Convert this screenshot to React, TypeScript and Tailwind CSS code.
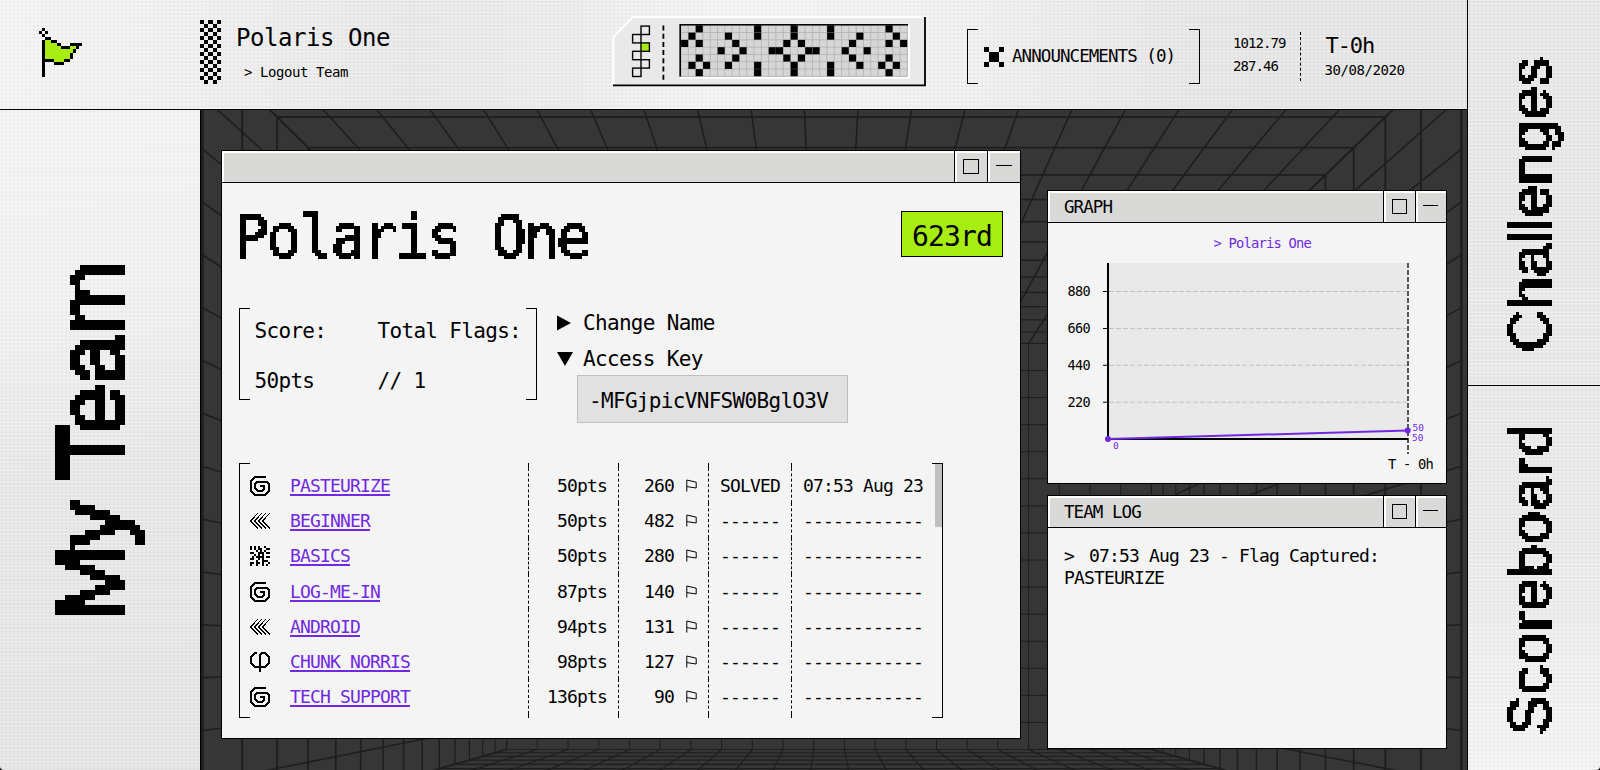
import type { ReactNode } from "react";

/* ---------- pixel helpers ---------- */

function PixelArt({ rows, colors, className }: { rows: string[]; colors: Record<string, string>; className: string }) {
  return (
    <svg
      viewBox={`0 0 ${rows[0].length} ${rows.length}`}
      preserveAspectRatio="none"
      shapeRendering="crispEdges"
      className={className}
    >
      {rows.map((row, y) =>
        row.split("").map((ch, x) =>
          colors[ch] ? <rect key={`${x}-${y}`} x={x} y={y} width={1} height={1} fill={colors[ch]} /> : null
        )
      )}
    </svg>
  );
}

/* Snap large lettering to a coarse pixel grid */
function PixelFilters() {
  return (
    <svg width="0" height="0" className="absolute">
      <filter id="grid5" x="0" y="0" width="100%" height="100%">
        <feFlood x="2" y="2" width="1" height="1" />
        <feComposite x="0" y="0" width="5" height="5" />
        <feTile result="mesh" />
        <feComposite in="SourceGraphic" in2="mesh" operator="in" />
        <feComponentTransfer>
          <feFuncA type="discrete" tableValues="0 1" />
        </feComponentTransfer>
        <feMorphology operator="dilate" radius="2" />
      </filter>
      <filter id="grid3" x="0" y="0" width="100%" height="100%">
        <feFlood x="1" y="1" width="1" height="1" />
        <feComposite x="0" y="0" width="3" height="3" />
        <feTile result="mesh" />
        <feComposite in="SourceGraphic" in2="mesh" operator="in" />
        <feComponentTransfer>
          <feFuncA type="discrete" tableValues="0 1" />
        </feComponentTransfer>
        <feMorphology operator="dilate" radius="1" />
      </filter>
    </svg>
  );
}

/* ---------- header pieces ---------- */

const FLAG = [
  ".x............",
  "x.x...........",
  ".x............",
  "..xx..........",
  ".xggxx........",
  ".xggggx...xxxx",
  ".xgggggxxxggx.",
  ".xgggggggggx..",
  ".xggggggggx...",
  ".xggggggggx...",
  ".xxxxgggxx....",
  ".x...xxx......",
  ".x............",
  ".x............",
  ".x............",
  ".x............",
];

const CHECKER = Array.from({ length: 16 }, (_, r) => (r % 2 ? ".x.x." : "x.x.x"));

const DISPLAY: number[][] = [
  [2, 10, 15, 20, 28],
  [1, 6, 10, 15, 20, 24, 29],
  [0, 2, 7, 14, 16, 23, 28, 30],
  [5, 8, 12, 13, 17, 18, 22, 25],
  [2, 7, 14, 16, 23, 28],
  [1, 3, 6, 10, 15, 20, 24, 27, 29],
  [2, 10, 15, 20, 28],
];

function Console() {
  const cell = 7.3;
  return (
    <svg viewBox="612 15 316 73" className="h-[73px] w-[316px] shrink-0">
      <polygon points="633,17 925,17 925,85 613.5,85 613.5,37" fill="#e9e9e9" />
      <path d="M613.5 85V37L633 17H925" fill="none" stroke="#fff" strokeWidth="2" />
      <path d="M613 85.3H925V17" fill="none" stroke="#000" strokeWidth="1.8" />
      {[
        [1, 0],
        [0, 1],
        [1, 2],
        [0, 3],
        [1, 4],
        [0, 5],
      ].map(([c, r]) => (
        <rect
          key={r}
          x={632.6 + c * 8.4}
          y={26.1 + r * 8.4}
          width={8.4}
          height={8.4}
          fill={r === 2 ? "#a8ed12" : "none"}
          stroke="#000"
          strokeWidth="1.4"
        />
      ))}
      <path d="M663.4 25.5V80" stroke="#000" strokeWidth="1.8" strokeDasharray="5 3.2" />
      <rect x="679.5" y="24" width="230" height="54" fill="#d6d6d6" />
      <path d="M680 78H909V24.5" fill="none" stroke="#fff" strokeWidth="2" />
      {Array.from({ length: 32 }, (_, i) => (
        <path key={`v${i}`} d={`M${681 + i * cell} 25V76.5`} stroke="#b5b5b5" strokeWidth="0.9" />
      ))}
      {Array.from({ length: 8 }, (_, i) => (
        <path key={`h${i}`} d={`M681 ${25.2 + i * cell}H907.5`} stroke="#b5b5b5" strokeWidth="0.9" />
      ))}
      {DISPLAY.map((cols, r) =>
        cols.map((c) => (
          <rect
            key={`${r}-${c}`}
            x={681.1 + c * cell}
            y={25.3 + r * cell}
            width={cell - 0.2}
            height={cell - 0.2}
            fill="#000"
          />
        ))
      )}
      <path d="M680.2 76.5V24.7H908" fill="none" stroke="#000" strokeWidth="1.6" />
    </svg>
  );
}

function Bracket({ className, children }: { className: string; children: ReactNode }) {
  return (
    <div className={`flex ${className}`}>
      <div className="w-[11px] shrink-0 border-y border-l border-black" />
      <div className="min-w-0 flex-1">{children}</div>
      <div className="w-[11px] shrink-0 border-y border-r border-black" />
    </div>
  );
}

/* ---------- wireframe room ---------- */

function Room() {
  const vx = 826;
  const vy = 658.5;
  const back = 322.4;
  const frames = Array.from({ length: 15 }, (_, k) => 1 / (0.0015886 + k * 0.00010809));
  const left = (w: number) => vx - w * 0.9906;
  const right = (w: number) => vx + w * 1.0094;
  const top = (w: number) => vy - w * 0.9772;
  const bottom = (w: number) => vy + w * 0.2823;
  const far = 900;
  const cols = Array.from({ length: 22 }, (_, i) => left(back) + (i * (right(back) - left(back))) / 21);
  const rows = Array.from({ length: 16 }, (_, i) => top(back) + (i * (bottom(back) - top(back))) / 15);
  const s = far / back;
  const wall = 629.5 / back;
  return (
    <svg viewBox="201 110 1266 660" className="absolute inset-0 h-full w-full" stroke="#1e1e1e" fill="none">
      <rect x="201" y="110" width="1266" height="660" fill="#363636" stroke="none" />
      {frames.map((w, k) => (
        <rect
          key={k}
          x={left(w)}
          y={top(w)}
          width={right(w) - left(w)}
          height={bottom(w) - top(w)}
          strokeWidth={k === 0 ? 2.6 : 1 + (14 - k) * 0.07}
        />
      ))}
      {cols.map((x, i) => (
        <g key={i}>
          <path d={`M${x} ${top(back)}L${vx + (x - vx) * wall} ${vy + (top(back) - vy) * wall}`} strokeWidth="1.6" />
          <path d={`M${x} ${bottom(back)}L${vx + (x - vx) * s} ${vy + (bottom(back) - vy) * s}`} strokeWidth="1.2" />
          <path d={`M${x} ${top(back)}V${bottom(back)}`} strokeWidth="1" />
        </g>
      ))}
      {rows.map((y, i) => (
        <g key={i}>
          <path d={`M${left(back)} ${y}L${left(629.5)} ${vy + (y - vy) * wall}`} strokeWidth="1.6" />
          <path d={`M${right(back)} ${y}L${right(629.5)} ${vy + (y - vy) * wall}`} strokeWidth="1.6" />
          <path d={`M${left(back)} ${y}H${right(back)}`} strokeWidth="1" />
        </g>
      ))}
    </svg>
  );
}

/* ---------- windows ---------- */

function Window({
  title,
  wide,
  className,
  children,
}: {
  title?: string;
  wide?: boolean;
  className: string;
  children: ReactNode;
}) {
  return (
    <section className={`relative flex flex-col border border-black bg-[#f4f4f4] ${className}`}>
      <div className="flex h-8 shrink-0 border-b border-black bg-[#d9d9d7]">
        <div className="flex-1 border-t-2 border-l-2 border-white pl-[14px] text-[17.5px] leading-[29px] tracking-[-0.94px]">
          {title}
        </div>
        <div className={`flex border-l border-black ${wide ? "w-[33px]" : "w-8"}`}>
          <div className="flex flex-1 items-center justify-center border-t-2 border-l-2 border-white">
            <div className={`mb-[2px] h-[15px] border border-black ${wide ? "mr-[2px] w-4" : "mr-[2px] w-[15px]"}`} />
          </div>
        </div>
        <div className={`flex border-l border-black ${wide ? "w-[33px]" : "w-[31px]"}`}>
          <div className="flex flex-1 justify-center border-t-2 border-l-2 border-white pt-[12px]">
            <div className={`mr-[3px] h-px bg-black ${wide ? "w-4" : "w-[15px]"}`} />
          </div>
        </div>
      </div>
      {children}
    </section>
  );
}

/* ---------- challenge table ---------- */

type IconKind = "spiral" | "chevrons" | "maze" | "phi";

const MAZE = [
  "x.x.x..x..",
  "x.x.xx..xx",
  "...x.x.x..",
  "xx..xxx.xx",
  "..x.x.x...",
  ".x.xxxx.xx",
  "xx..x.x...",
  "...x..xxx.",
  "xx.xx.x..x",
  "x..x..x.x.",
];

function CategoryIcon({ kind }: { kind: IconKind }) {
  if (kind === "maze") return <PixelArt rows={MAZE} colors={{ x: "#000" }} className="size-5" />;
  return (
    <svg viewBox="0 0 20 20" className="mt-px size-5" fill="none" stroke="#000" shapeRendering="crispEdges">
      {kind === "spiral" && (
        <path d="M16 1H5L1 5V15L5 19H15L19 15V8L16 5.5H8L5 8V12L8 15H12L14 13V10H10" strokeWidth="2" />
      )}
      {kind === "chevrons" && (
        <path
          d="M8 2L.5 9.7L8 17.5M12 2L4.5 9.7L12 17.5M16 2L8.5 9.7L16 17.5M20 2L12.5 9.7L20 17.5"
          strokeWidth="1.3"
        />
      )}
      {kind === "phi" && <path d="M7 1H5L1 5V11L5 15H15L19 11V5L15 1H12L10 3V20" strokeWidth="1.9" />}
    </svg>
  );
}

function Pennant() {
  return (
    <svg viewBox="0 0 11 13" className="h-[13px] w-[11px]" fill="none" stroke="#000" strokeWidth="1">
      <path d="M0.8 12.6V1L10.2 3.2V9L0.8 7.6" />
    </svg>
  );
}

const CHALLENGES: { icon: IconKind; name: string; pts: string; flags: string; status: string; at: string }[] = [
  { icon: "spiral", name: "PASTEURIZE", pts: "50pts", flags: "260", status: "SOLVED", at: "07:53 Aug 23" },
  { icon: "chevrons", name: "BEGINNER", pts: "50pts", flags: "482", status: "------", at: "------------" },
  { icon: "maze", name: "BASICS", pts: "50pts", flags: "280", status: "------", at: "------------" },
  { icon: "spiral", name: "LOG-ME-IN", pts: "87pts", flags: "140", status: "------", at: "------------" },
  { icon: "chevrons", name: "ANDROID", pts: "94pts", flags: "131", status: "------", at: "------------" },
  { icon: "phi", name: "CHUNK NORRIS", pts: "98pts", flags: "127", status: "------", at: "------------" },
  { icon: "spiral", name: "TECH SUPPORT", pts: "136pts", flags: "90", status: "------", at: "------------" },
];

function ChallengeTable() {
  const cell = "flex h-full items-center border-l border-dashed border-black";
  return (
    <div className="flex h-[255px] w-[704px] text-[18px] tracking-[-0.84px]">
      <div className="w-[11px] shrink-0 border-y border-l border-black" />
      <div className="flex h-full w-[682px] shrink-0 flex-col">
        <div className="grid h-[5px] grid-cols-[278px_90px_90px_83px_141px]">
          <div />
          <div className={cell} />
          <div className={cell} />
          <div className={cell} />
          <div className={cell} />
        </div>
        {CHALLENGES.map((c) => (
          <div key={c.name} className="grid h-[35.2px] grid-cols-[278px_90px_90px_83px_141px]">
            <div className="flex items-center">
              <CategoryIcon kind={c.icon} />
              <a className="ml-5 text-[#7029e0] underline decoration-2 underline-offset-2">{c.name}</a>
            </div>
            <div className={`${cell} justify-end pr-[11px]`}>{c.pts}</div>
            <div className={`${cell} justify-end gap-[12px] pr-[11px]`}>
              {c.flags}
              <Pennant />
            </div>
            <div className={`${cell} pl-[11px]`}>{c.status}</div>
            <div className={`${cell} pl-[11px]`}>{c.at}</div>
          </div>
        ))}
        <div className="grid flex-1 grid-cols-[278px_90px_90px_83px_141px]">
          <div />
          <div className={cell} />
          <div className={cell} />
          <div className={cell} />
          <div className={cell} />
        </div>
      </div>
      <div className="flex w-[11px] shrink-0 justify-end border-y border-r border-black">
        <div className="h-[63px] w-[7px] bg-[#c0c0c0]" />
      </div>
    </div>
  );
}

/* ---------- graph ---------- */

function Graph() {
  return (
    <svg viewBox="1048 223 398 260" className="h-[260px] w-[398px]" fontFamily="DejaVu Sans Mono, monospace">
      <rect x="1108" y="263" width="300" height="176" fill="#e9e9e9" />
      {[
        ["880", 291.5],
        ["660", 328.5],
        ["440", 365.3],
        ["220", 402.2],
      ].map(([label, y]) => (
        <g key={label}>
          <path d={`M1109 ${y}H1407`} stroke="#c3c3c3" strokeDasharray="5 2" />
          <path d={`M1103 ${y}H1108`} stroke="#000" />
          <text x="1067.5" y={Number(y) + 4.6} fontSize="13.5" letterSpacing="-0.6">
            {label}
          </text>
        </g>
      ))}
      <path d="M1408 263V454" stroke="#555" strokeWidth="2" strokeDasharray="5 2" />
      <path d="M1108 263V439H1408" fill="none" stroke="#000" strokeWidth="2" />
      <path d="M1108 439L1407.7 430.5" stroke="#7029e0" strokeWidth="2" />
      <circle cx="1108" cy="439" r="3" fill="#7029e0" />
      <circle cx="1407.7" cy="430.5" r="3" fill="#7029e0" />
      <g fill="#7029e0" fontSize="9.5">
        <text x="1113" y="448.8">
          0
        </text>
        <text x="1412.5" y="430.8">
          50
        </text>
        <text x="1412" y="441">
          50
        </text>
      </g>
      <text x="1213.5" y="248.2" fontSize="13.8" letterSpacing="-0.81" fill="#7029e0">
        {"> Polaris One"}
      </text>
      <text x="1388" y="469" fontSize="13.8" letterSpacing="-0.81">
        T - 0h
      </text>
    </svg>
  );
}

/* ---------- page ---------- */

const halftone =
  "bg-[radial-gradient(circle,#0000000b_0.8px,transparent_1px),linear-gradient(#ffffff30_1px,transparent_1px)] bg-[length:4px_4px,3px_3px]";

export default function App() {
  return (
    <div className="h-[770px] w-[1600px] overflow-hidden bg-black font-['DejaVu_Sans_Mono',monospace] text-black">
      <PixelFilters />
      <div className="flex h-full overflow-hidden rounded-b-[4px]">
        <div className="flex w-[1467px] flex-col">
          <header className="h-[110px] border-b border-black bg-[linear-gradient(90deg,#f4f4f4_0%,#f2f2f2_8%,#e9e9e9_28%,#ececec_38%,#f5f5f5_50%,#f0f0f0_66%,#e7e7e7_82%,#e6e6e6_100%)]">
            <div className={`flex h-full ${halftone}`}>
              <div className="w-[200px] pt-[28px] pl-[39px]">
                <PixelArt rows={FLAG} colors={{ x: "#000", g: "#a8ed12" }} className="h-[49px] w-[43px]" />
              </div>
              <div className="pt-[20px]">
                <PixelArt rows={CHECKER} colors={{ x: "#000" }} className="h-[64px] w-[21px]" />
              </div>
              <div className="w-[391px] pt-[23px] pl-[15px]">
                <div className="text-[24px] leading-[30px] tracking-[-0.45px]">Polaris One</div>
                <div className="mt-[9px] ml-[8px] text-[14px] leading-5 tracking-[-0.43px]">{"> Logout Team"}</div>
              </div>
              <div className="pt-[15px]">
                <Console />
              </div>
              <Bracket className="mt-[29px] ml-[39px] h-[55px] w-[233px]">
                <div className="flex h-full items-center pl-[6px] text-[17.5px] tracking-[-0.94px]">
                  <svg viewBox="0 0 20 20" className="size-5 shrink-0">
                    <path d="M0 0h5v5h-5zM15 0h5v5h-5zM0 15h5v5h-5zM15 15h5v5h-5zM5 5h10v10H5z" />
                  </svg>
                  <div className="ml-[8px] whitespace-nowrap">ANNOUNCEMENTS (0)</div>
                </div>
              </Bracket>
              <div className="pt-[32px] pl-[33px] text-[14px] leading-[23px] tracking-[-0.93px]">
                <div>1012.79</div>
                <div>287.46</div>
              </div>
              <div className="mt-[32px] ml-[14px] h-[49px] border-l border-dashed border-black" />
              <div className="pt-[32px] pl-[24px]">
                <div className="ml-px text-[22px] leading-[28px] tracking-[-1.1px]">T-0h</div>
                <div className="-mt-px text-[14px] leading-[22px] tracking-[-0.43px]">30/08/2020</div>
              </div>
            </div>
          </header>
          <div className="flex h-[660px]">
            <aside className="w-[200px] bg-[linear-gradient(170deg,#f4f4f4_0%,#f3f3f3_25%,#e8e8e8_55%,#e6e6e6_100%)]">
              <div className={`h-full ${halftone}`}>
                <div className="flex h-full w-full items-center justify-center [filter:url(#grid5)]">
                  <h2 className="mt-[2px] ml-[-17px] rotate-180 scale-y-[0.945] font-['Liberation_Sans',sans-serif] text-[94px] leading-none whitespace-nowrap [-webkit-text-stroke:3.4px_black] [writing-mode:vertical-rl]">
                    My Team
                  </h2>
                </div>
              </div>
            </aside>
            <main className="relative flex flex-1 border-l border-black">
              <Room />
              <Window wide className="mt-[40px] ml-[20px] h-[589px] w-[800px]">
                <div className="flex items-start justify-between pt-[22px] pr-[17px] pl-[12px]">
                  <div className="[filter:url(#grid3)]">
                    <h1 className="pr-4 text-[58px] leading-[64px] tracking-[-2.7px] [-webkit-text-stroke:1.3px_black]">
                      Polaris One
                    </h1>
                  </div>
                  <div className="mt-[6px] h-[46px] w-[102px] border border-black bg-[#a8ed12] pl-[10px] text-[28px] leading-[49px] tracking-[-0.86px]">
                    623rd
                  </div>
                </div>
                <div className="mt-[39px] flex pl-[17px] text-[21px] leading-[30px] tracking-[-0.68px]">
                  <Bracket className="h-[92px] w-[298px]">
                    <div className="grid grid-cols-[123px_1fr] gap-y-[20px] pt-[8px] pl-[4.5px] whitespace-nowrap">
                      <div>Score:</div>
                      <div>Total Flags:</div>
                      <div>50pts</div>
                      <div>// 1</div>
                    </div>
                  </Bracket>
                  <div className="pl-[20px]">
                    <div className="flex h-[30px] items-center">
                      <svg viewBox="0 0 26 16" className="h-4 w-[26px]">
                        <path d="M0 0.5L14 8L0 15.5Z" />
                      </svg>
                      Change Name
                    </div>
                    <div className="mt-[5px] flex h-[32px] items-center">
                      <svg viewBox="0 0 26 16" className="h-4 w-[26px]">
                        <path d="M0 1H16L8 15Z" />
                      </svg>
                      Access Key
                    </div>
                    <div className="ml-[20px] h-[48px] w-[271px] border border-[#bfbfbf] bg-[#e1e1e1] pl-[11px] leading-[50px]">
                      -MFGjpicVNFSW0BglO3V
                    </div>
                  </div>
                </div>
                <div className="mt-[40px] pl-[17px]">
                  <ChallengeTable />
                </div>
              </Window>
              <div className="ml-[26px] flex flex-col gap-[11px] pt-[80px]">
                <Window title="GRAPH" className="h-[294px] w-[400px]">
                  <Graph />
                </Window>
                <Window title="TEAM LOG" className="h-[254px] w-[400px]">
                  <p className="pt-[17px] pl-[16px] text-[18px] leading-[22px] tracking-[-0.84px]">
                    <span className="mr-[15px]">{">"}</span>
                    07:53 Aug 23 - Flag Captured:
                    <br />
                    PASTEURIZE
                  </p>
                </Window>
              </div>
            </main>
          </div>
        </div>
        <nav className="w-[133px] border-l border-black bg-[linear-gradient(#e8e8e8,#eaeaea_70%,#f4f4f4)]">
          <div className={`flex h-full flex-col ${halftone}`}>
            <div className="h-[386px] border-b border-black">
              <a className="flex h-full items-center justify-center [filter:url(#grid3)]">
                <span className="mt-[24px] mr-[7px] rotate-180 font-['Liberation_Sans',sans-serif] text-[59px] leading-none whitespace-nowrap [-webkit-text-stroke:1.8px_black] [writing-mode:vertical-rl]">
                  Challenges
                </span>
              </a>
            </div>
            <a className="flex h-[384px] items-center justify-center [filter:url(#grid3)]">
              <span className="mt-[3px] mr-[7px] rotate-180 font-['Liberation_Sans',sans-serif] text-[59px] leading-none tracking-[0.7px] whitespace-nowrap [-webkit-text-stroke:1.8px_black] [writing-mode:vertical-rl]">
                Scoreboard
              </span>
            </a>
          </div>
        </nav>
      </div>
    </div>
  );
}
